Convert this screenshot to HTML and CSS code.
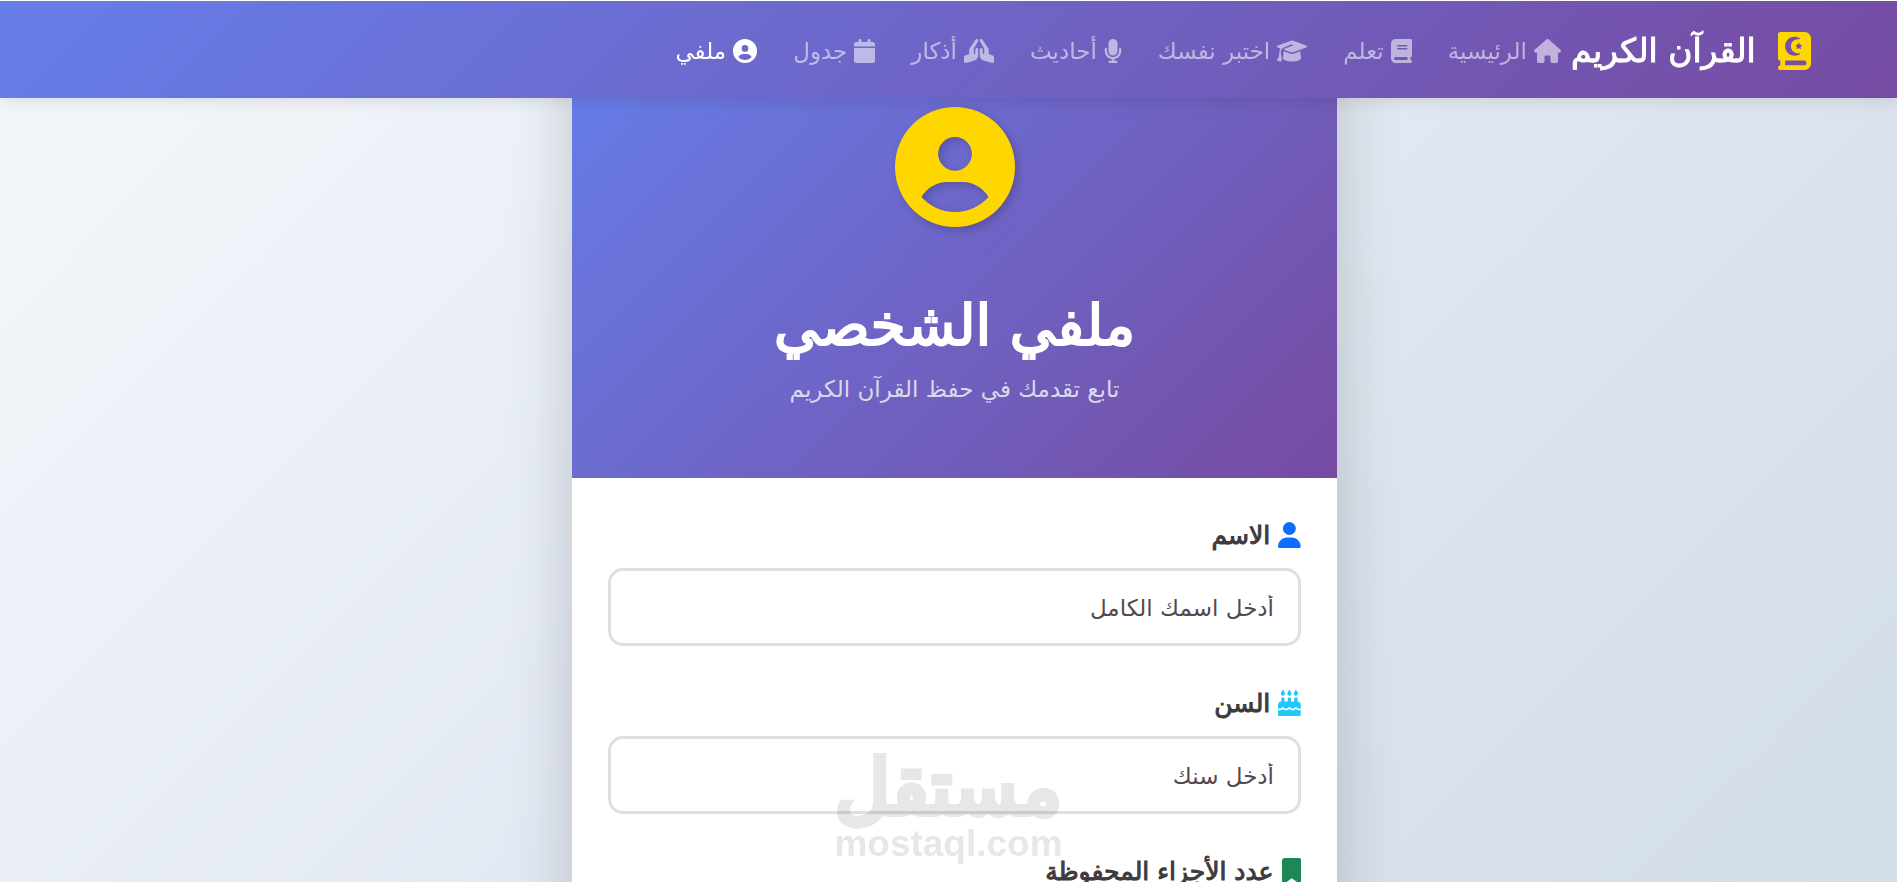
FILE: index.html
```
<!DOCTYPE html>
<html lang="ar" dir="rtl">
<head>
<meta charset="UTF-8">
<meta name="viewport" content="width=device-width, initial-scale=1">
<title>ملفي الشخصي - القرآن الكريم</title>
<link rel="stylesheet" href="styles.css">
</head>
<body>

<nav class="navbar">
  <a class="brand" href="#">
    <svg class="brand-icon" viewBox="0 0 448 512" aria-hidden="true"><path d="M352 0c53 0 96 43 96 96V416c0 53-43 96-96 96H64 32c-17.700 0-32-14.300-32-32s14.300-32 32-32V384c-17.700 0-32-14.300-32-32V32C0 14.300 14.300 0 32 0H64 352zm0 384H96v64H352c17.700 0 32-14.300 32-32s-14.300-32-32-32zM274.100 150.200l-8.900 21.400-23.100 1.900c-5.700 .5-8 7.500-3.700 11.200L256 199.800l-5.400 22.600c-1.300 5.500 4.700 9.900 9.600 6.900L280 217.200l19.800 12.100c4.900 3 10.900-1.400 9.600-6.900L304 199.800l17.600-15.100c4.300-3.700 2-10.800-3.700-11.200l-23.100-1.900-8.900-21.400c-2.200-5.300-9.600-5.300-11.800 0zM96 192c0 70.700 57.300 128 128 128c25.600 0 49.500-7.500 69.500-20.500c3.200-2.100 4.500-6.200 3.100-9.700s-5.200-5.600-9-4.800c-6.100 1.200-12.500 1.900-19 1.900c-52.400 0-94.900-42.500-94.900-94.900s42.500-94.900 94.900-94.900c6.500 0 12.800 .7 19 1.900c3.800 .8 7.500-1.300 9-4.800s.2-7.600-3.100-9.700C273.500 71.500 249.600 64 224 64C153.300 64 96 121.300 96 192z"/></svg>
    <span>القرآن الكريم</span>
  </a>
  <ul class="nav-list">
    <li><a class="nav-link" href="#">
      <svg class="icon" viewBox="0 0 576 512" aria-hidden="true"><path d="M575.8 255.5c0 18-15 32.1-32 32.1h-32l.7 160.2c0 2.7-.2 5.4-.5 8.1V472c0 22.1-17.9 40-40 40H392c-22.1 0-40-17.900-40-40V384c0-17.700-14.300-32-32-32H256c-17.700 0-32 14.300-32 32v88c0 22.100-17.900 40-40 40H104c-22.100 0-40-17.900-40-40V287.600H32c-18 0-32-14-32-32.100c0-9 3-17 10-24L266.400 8c7-7 15-8 22-8s15 2 21 7L564.800 231.500c8 7 12 15 11 24z"/></svg>
      الرئيسية</a></li>
    <li><a class="nav-link" href="#">
      <svg class="icon" viewBox="0 0 448 512" aria-hidden="true"><path d="M96 0C43 0 0 43 0 96V416c0 53 43 96 96 96H416c17.700 0 32-14.300 32-32s-14.300-32-32-32V384c17.700 0 32-14.300 32-32V32c0-17.700-14.300-32-32-32H96zm0 384H352v64H96c-17.700 0-32-14.300-32-32s14.300-32 32-32zm32-240c0-8.800 7.200-16 16-16H336c8.800 0 16 7.200 16 16s-7.200 16-16 16H144c-8.800 0-16-7.200-16-16zm16 48H336c8.800 0 16 7.200 16 16s-7.200 16-16 16H144c-8.800 0-16-7.200-16-16s7.200-16 16-16z"/></svg>
      تعلم</a></li>
    <li><a class="nav-link" href="#">
      <svg class="icon" viewBox="0 0 640 512" aria-hidden="true"><path d="M320 32c-8.100 0-16.100 1.400-23.700 4.100L15.800 137.400C6.300 140.900 0 149.900 0 160s6.300 19.100 15.800 22.600l57.900 20.900C57.300 229.300 48 259.800 48 291.900v28.100c0 28.400-10.800 57.700-22.300 80.800c-6.500 13-13.900 25.800-22.500 37.600C0 442.700-.9 448.300 .9 453.400s6 8.900 11.200 10.200l64 16c4.200 1.100 8.700 .3 12.400-2s6.300-6.100 7.100-10.400c8.600-42.800 4.300-81.200-2.100-108.700C90.300 344.300 86 329.800 80 316.500V291.900c0-30.200 10.200-58.700 27.900-81.500c12.900-15.500 29.600-28 49.200-35.700l157-61.700c8.200-3.200 17.500 .8 20.700 9s-.8 17.500-9 20.700l-157 61.700c-12.400 4.900-23.300 12.400-32.200 21.600l159.600 57.600c7.600 2.700 15.600 4.100 23.700 4.100s16.100-1.400 23.700-4.100L624.200 182.600c9.500-3.400 15.800-12.500 15.800-22.600s-6.300-19.100-15.800-22.600L343.700 36.100C336.100 33.400 328.100 32 320 32zM128 408c0 35.300 86 72 192 72s192-36.700 192-72L496.700 262.600 354.500 314c-11.100 4-22.800 6-34.500 6s-23.500-2-34.500-6L143.300 262.600 128 408z"/></svg>
      اختبر نفسك</a></li>
    <li><a class="nav-link" href="#">
      <svg class="icon" viewBox="0 0 384 512" aria-hidden="true"><path d="M192 0C139 0 96 43 96 96V256c0 53 43 96 96 96s96-43 96-96V96c0-53-43-96-96-96zM64 216c0-13.300-10.700-24-24-24s-24 10.700-24 24v40c0 89.100 66.200 162.700 152 174.400V464H120c-13.300 0-24 10.700-24 24s10.700 24 24 24h144c13.300 0 24-10.700 24-24s-10.700-24-24-24H216V430.400c85.800-11.700 152-85.300 152-174.400V216c0-13.300-10.700-24-24-24s-24 10.700-24 24v40c0 70.700-57.300 128-128 128s-128-57.300-128-128V216z"/></svg>
      أحاديث</a></li>
    <li><a class="nav-link" href="#">
      <svg class="icon" viewBox="0 0 640 512" aria-hidden="true"><path d="M351.200 4.800c3.200-2 6.600-3.300 10-4.100c4.700-1 9.600-.9 14.100 .1c7.700 1.800 14.800 6.500 19.400 13.600L514.600 194.200c8.800 13.100 13.400 28.600 13.400 44.400v73.500c0 6.900 4.400 13 10.900 15.200l79.200 26.400C631.200 358 640 370.200 640 384v96c0 9.900-4.600 19.300-12.500 25.400s-18.100 8.100-27.700 5.500L431 465.900c-56-14.900-95-65.700-95-123.700V224c0-17.700 14.300-32 32-32s32 14.300 32 32v80c0 8.800 7.200 16 16 16s16-7.200 16-16V219.100c0-7-1.800-13.800-5.300-19.800L340.300 48.100c-1.700-3-2.900-6.100-3.600-9.300c-1-4.700-1-9.600 .1-14.100c1.900-8 6.800-15.200 14.300-19.900zm-62.400 0c7.500 4.600 12.400 11.900 14.300 19.900c1.100 4.600 1.200 9.400 .1 14.100c-.7 3.200-1.900 6.300-3.600 9.300L213.300 199.300c-3.500 6-5.300 12.900-5.300 19.800V304c0 8.800 7.200 16 16 16s16-7.200 16-16V224c0-17.700 14.300-32 32-32s32 14.300 32 32V342.300c0 58-39 108.700-95 123.700l-168.700 45c-9.600 2.600-19.900 .5-27.700-5.500S0 490 0 480V384c0-13.800 8.800-26 21.900-30.400l79.200-26.400c6.500-2.200 10.900-8.300 10.900-15.200V238.500c0-15.800 4.700-31.200 13.400-44.400L245.200 14.500c4.600-7.100 11.700-11.800 19.400-13.600c4.600-1.100 9.400-1.200 14.100-.1c3.500 .8 6.900 2.100 10 4.100z"/></svg>
      أذكار</a></li>
    <li><a class="nav-link" href="#">
      <svg class="icon" viewBox="0 0 448 512" aria-hidden="true"><path d="M96 32V64H48C21.500 64 0 85.500 0 112v48H448V112c0-26.500-21.500-48-48-48H352V32c0-17.700-14.300-32-32-32s-32 14.300-32 32V64H160V32c0-17.700-14.300-32-32-32S96 14.300 96 32zM448 192H0V464c0 26.500 21.500 48 48 48H400c26.500 0 48-21.500 48-48V192z"/></svg>
      جدول</a></li>
    <li><a class="nav-link active" href="#">
      <svg class="icon" viewBox="0 0 512 512" aria-hidden="true"><path d="M399 384.200C376.900 345.800 335.400 320 288 320H224c-47.400 0-88.900 25.800-111 64.200c35.200 39.200 86.200 63.800 143 63.800s107.800-24.700 143-63.800zM0 256a256 256 0 1 1 512 0A256 256 0 1 1 0 256zm256 16a72 72 0 1 0 0-144 72 72 0 1 0 0 144z"/></svg>
      ملفي</a></li>
  </ul>
</nav>

<main class="page">
  <div class="profile-card">
    <header class="profile-header">
      <svg class="profile-icon" viewBox="0 0 512 512" aria-hidden="true"><path d="M399 384.200C376.900 345.800 335.400 320 288 320H224c-47.400 0-88.900 25.800-111 64.200c35.200 39.200 86.200 63.800 143 63.800s107.800-24.700 143-63.800zM0 256a256 256 0 1 1 512 0A256 256 0 1 1 0 256zm256 16a72 72 0 1 0 0-144 72 72 0 1 0 0 144z"/></svg>
      <h1>ملفي الشخصي</h1>
      <p>تابع تقدمك في حفظ القرآن الكريم</p>
    </header>

    <form class="profile-form">
      <div class="form-group">
        <label for="name">
          <svg class="icon icon-name" viewBox="0 0 448 512" aria-hidden="true"><path d="M224 256A128 128 0 1 0 224 0a128 128 0 1 0 0 256zm-45.700 48C79.800 304 0 383.800 0 482.300C0 498.700 13.300 512 29.700 512H418.300c16.400 0 29.700-13.300 29.700-29.700C448 383.800 368.200 304 269.700 304H178.300z"/></svg>
          الاسم</label>
        <input type="text" id="name" placeholder="أدخل اسمك الكامل">
      </div>
      <div class="form-group">
        <label for="age">
          <svg class="icon icon-age" viewBox="0 0 448 512" aria-hidden="true"><path d="M86.400 5.500L61.800 47.600C58 54.100 56 61.600 56 69.200V72c0 22.100 17.900 40 40 40s40-17.900 40-40V69.200c0-7.600-2-15-5.800-21.600L105.600 5.500C103.600 2.100 100 0 96 0s-7.600 2.100-9.600 5.500zm128 0L189.800 47.600c-3.800 6.500-5.800 14-5.800 21.600V72c0 22.100 17.900 40 40 40s40-17.900 40-40V69.200c0-7.600-2-15-5.800-21.600L233.600 5.500C231.600 2.100 228 0 224 0s-7.600 2.100-9.600 5.500zm128 0L317.800 47.600c-3.800 6.500-5.800 14-5.800 21.600V72c0 22.100 17.900 40 40 40s40-17.900 40-40V69.200c0-7.600-2-15-5.800-21.600L361.600 5.500C359.600 2.100 356 0 352 0s-7.600 2.100-9.600 5.500zM128 176c0-17.700-14.300-32-32-32s-32 14.300-32 32v48c-35.300 0-64 28.700-64 64v71c8 5 18 9 29 9c24 0 47-20 56-28c6-6 16-6 22 0c9 8 32 28 53 28s44-20 53-28c6-6 16-6 22 0c9 8 32 28 53 28s44-20 53-28c6-6 16-6 22 0c9 8 30 28 56 28c11 0 21-4 29-9V288c0-35.300-28.700-64-64-64V176c0-17.700-14.300-32-32-32s-32 14.300-32 32v48H256V176c0-17.700-14.300-32-32-32s-32 14.300-32 32v48H128V176zM448 394c-9 4-18 6-29 6c-26 0-50-14-67-26c-15 10-39 26-64 26s-49-16-64-26c-15 10-39 26-64 26s-49-16-64-26c-17 12-41 26-67 26c-11 0-20-2-29-6v86c0 17.700 14.300 32 32 32H416c17.700 0 32-14.300 32-32V394z"/></svg>
          السن</label>
        <input type="text" id="age" placeholder="أدخل سنك">
      </div>
      <div class="form-group">
        <label for="parts">
          <svg class="icon icon-parts" viewBox="0 0 384 512" aria-hidden="true"><path d="M0 48V487.700C0 501.100 10.900 512 24.300 512c5 0 9.900-1.500 14-4.400L192 400 345.700 507.600c4.100 2.900 9 4.400 14 4.400c13.400 0 24.300-10.900 24.300-24.300V48c0-26.500-21.500-48-48-48H48C21.500 0 0 21.500 0 48z"/></svg>
          عدد الأجزاء المحفوظة</label>
        <input type="text" id="parts">
      </div>
    </form>
  </div>
</main>

<div class="watermark">
  <span class="watermark-name">مستقل</span>
  <span class="watermark-url" dir="ltr">mostaql.com</span>
</div>

</body>
</html>
```
FILE: styles.css
```
* {
  box-sizing: border-box;
}
body {
  margin: 0;
  height: 100vh;
  overflow: hidden;
  font-family: "DejaVu Sans", "Noto Sans", sans-serif;
  font-size: 23px;
  color: #403a3e;
  background: linear-gradient(135deg, #f5f8fa 0%, #eaeff7 30%, #dce3ed 70%, #d2dde8 100%);
}
svg {
  fill: currentColor;
}

/* navbar */
.navbar {
  position: fixed;
  top: 0;
  left: 0;
  right: 0;
  z-index: 10;
  display: flex;
  align-items: center;
  gap: 10px;
  height: 98px;
  padding: 2px 86px 0;
  border-top: 1px solid #fff;
  background: linear-gradient(135deg, #667eea 0%, #764ba2 100%);
  box-shadow: 0 3px 15px rgba(0, 0, 0, 0.1);
}
.brand {
  display: flex;
  align-items: center;
  gap: 22px;
  color: #fff;
  font-size: 33px;
  -webkit-text-stroke: 1px currentColor;
  text-decoration: none;
  white-space: nowrap;
}
.brand-icon {
  height: 38px;
  color: #ffd700;
}
.nav-list {
  display: flex;
  gap: 36px;
  margin: 0;
  padding: 0;
  list-style: none;
}
.nav-link {
  display: flex;
  align-items: center;
  gap: 7px;
  color: rgba(255, 255, 255, 0.55);
  text-decoration: none;
  white-space: nowrap;
}
.nav-link.active {
  color: #fff;
}
.icon {
  height: 24px;
}

/* profile */
.page {
  padding: 35px 0 0 12px;
}
.profile-card {
  max-width: 765px;
  margin: 0 auto;
  background: #fff;
  box-shadow: 0 15px 60px rgba(0, 0, 0, 0.18);
}
.profile-header {
  padding: 72px 36px 71px;
  color: #fff;
  text-align: center;
  background: linear-gradient(135deg, #667eea 0%, #764ba2 100%);
}
.profile-icon {
  display: block;
  height: 120px;
  margin: 0 auto 62px;
  color: #ffd700;
  filter: drop-shadow(3px 3px 4px rgba(0, 0, 0, 0.2));
}
.profile-header h1 {
  margin: 0 0 10px;
  font-size: 57px;
  font-weight: normal;
  -webkit-text-stroke: 2px currentColor;
  line-height: 72px;
}
.profile-header p {
  margin: 0;
  color: #d8daec;
  font-size: 23px;
  line-height: 36px;
}
.profile-form {
  padding: 36px;
}
.form-group {
  margin-bottom: 36px;
}
.form-group label {
  display: flex;
  align-items: center;
  gap: 8px;
  height: 42px;
  margin-bottom: 12px;
  font-size: 25px;
  -webkit-text-stroke: 1px currentColor;
}
.form-group .icon {
  height: 26px;
}
.icon-name {
  color: #0d6efd;
}
.icon-age {
  color: #22c8f4;
}
.icon-parts {
  color: #1d8856;
}
.form-group input {
  display: block;
  width: 100%;
  height: 78px;
  padding: 2px 24px 0;
  border: 3px solid #dedfe1;
  border-radius: 15px;
  background: #fff;
  color: inherit;
  font: inherit;
}
.form-group input::placeholder {
  color: #54494f;
  opacity: 1;
}

/* site mark over the page */
.watermark {
  position: fixed;
  left: 50%;
  bottom: 18px;
  z-index: 5;
  display: flex;
  flex-direction: column;
  align-items: center;
  transform: translateX(-50%);
  color: #464650;
  opacity: 0.13;
  pointer-events: none;
}
.watermark-name {
  font-size: 76px;
  line-height: 72px;
  -webkit-text-stroke: 6px currentColor;
}
.watermark-url {
  font-family: "Liberation Sans", Arial, sans-serif;
  font-size: 37px;
  font-weight: bold;
  line-height: 40px;
}
```
